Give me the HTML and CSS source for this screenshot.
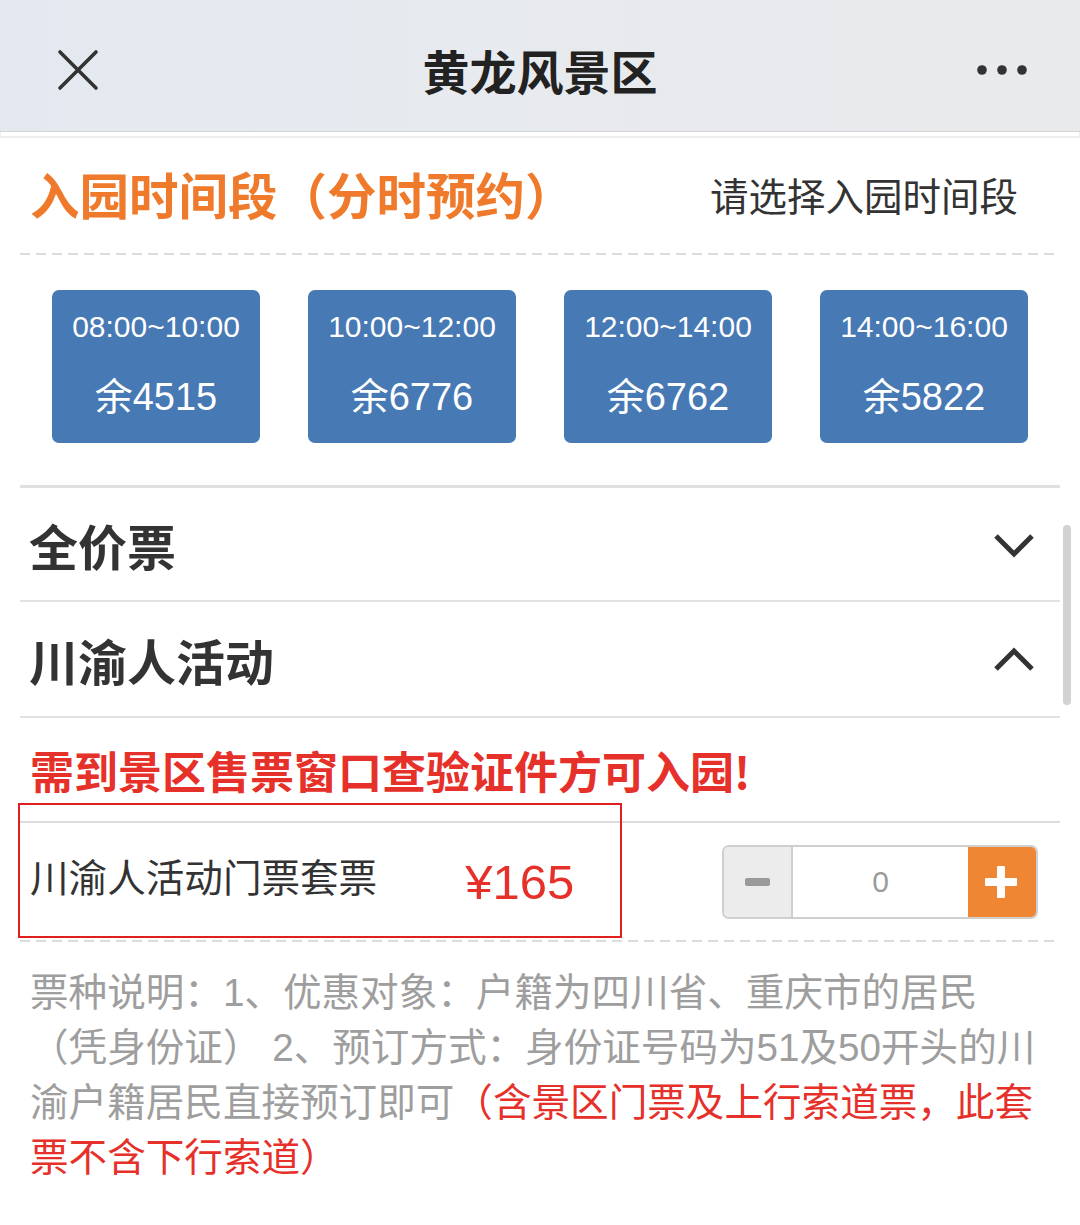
FILE: index.html
```html
<!DOCTYPE html>
<html lang="zh-CN">
<head>
<meta charset="utf-8">
<title>黄龙风景区</title>
<link rel="stylesheet" href="styles.css">
</head>
<body>
<header class="topbar">
  <svg class="close" width="42" height="42" viewBox="0 0 42 42"><path d="M3 3 L39 39 M39 3 L3 39" stroke="#333" stroke-width="3.6" stroke-linecap="round" fill="none"/></svg>
  <h1 class="title">黄龙风景区</h1>
  <svg class="more" width="52" height="12" viewBox="0 0 52 12"><circle cx="6" cy="6" r="4.8" fill="#333"/><circle cx="26" cy="6" r="4.8" fill="#333"/><circle cx="46" cy="6" r="4.8" fill="#333"/></svg>
</header>

<main class="page">
  <div class="scrollbar"></div>

  <section class="slot-head">
    <h2 class="slot-title">入园时间段（分时预约）</h2>
    <span class="slot-hint">请选择入园时间段</span>
  </section>
  <div class="dash"></div>

  <section class="slots">
    <div class="slot"><span class="slot-time">08:00~10:00</span><span class="slot-left">余4515</span></div>
    <div class="slot"><span class="slot-time">10:00~12:00</span><span class="slot-left">余6776</span></div>
    <div class="slot"><span class="slot-time">12:00~14:00</span><span class="slot-left">余6762</span></div>
    <div class="slot"><span class="slot-time">14:00~16:00</span><span class="slot-left">余5822</span></div>
  </section>

  <div class="acc acc-first">
    <span class="acc-name">全价票</span>
    <svg class="chev" width="44" height="30" viewBox="0 0 44 30"><polyline points="4,6 22,24 40,6" stroke="#333" stroke-width="5" fill="none" stroke-linejoin="miter"/></svg>
  </div>
  <div class="acc">
    <span class="acc-name">川渝人活动</span>
    <svg class="chev" width="44" height="30" viewBox="0 0 44 30"><polyline points="4,24 22,6 40,24" stroke="#333" stroke-width="5" fill="none" stroke-linejoin="miter"/></svg>
  </div>

  <p class="notice">需到景区售票窗口查验证件方可入园!</p>

  <div class="ticket">
    <div class="mark"></div>
    <span class="ticket-name">川渝人活动门票套票</span>
    <span class="ticket-price">¥165</span>
    <div class="stepper">
      <span class="step-minus"><i></i></span>
      <span class="step-val">0</span>
      <span class="step-plus"><i class="h"></i><i class="v"></i></span>
    </div>
  </div>
  <div class="dash"></div>

  <p class="desc">票种说明：1、优惠对象：户籍为四川省、重庆市的居民（凭身份证） 2、预订方式：身份证号码为51及50开头的川渝户籍居民直接预订即可<span class="red">（含景区门票及上行索道票，此套票不含下行索道）</span></p>
</main>
</body>
</html>
```

FILE: styles.css
```css
* { box-sizing: border-box; }
html, body { margin: 0; padding: 0; background: #fff; }
body {
  font-family: "Liberation Sans", "Noto Sans CJK SC", sans-serif;
  color: #333;
  width: 1080px;
  height: 1225px;
  overflow: hidden;
}

.topbar {
  height: 132px;
  display: flex;
  align-items: center;
  justify-content: space-between;
  padding: 8px 52px 0 57px;
  background: linear-gradient(90deg, #e4e9f1 0%, #e7eaee 45%, #e9eaec 100%);
  border-bottom: 1px solid #d3d3d3;
  box-shadow: 0 5px 0 -1px #fff, 0 6px 0 0 #eeeeee;
  position: relative;
  z-index: 2;
}
.close { display: block; }
.title {
  margin: 0;
  font-family: "Noto Sans CJK SC", sans-serif;
  font-size: 47px;
  font-weight: 700;
  color: #222;
  position: absolute;
  left: 0; right: 0;
  top: 40px;
  line-height: 60px;
  text-align: center;
  pointer-events: none;
}
.more { display: block; }

.page {
  margin: 0 20px;
  position: relative;
}
.scrollbar {
  position: absolute;
  left: 1043px;
  top: 393px;
  width: 8px;
  height: 180px;
  border-radius: 4px;
  background: #d2d2d2;
}

.slot-head {
  height: 121px;
  padding: 2px 42px 0 10px;
  display: flex;
  align-items: center;
  justify-content: space-between;
}
.slot-title {
  margin: 0;
  font-family: "Noto Sans CJK SC", sans-serif;
  font-size: 49.5px;
  font-weight: 700;
  color: #ef7a2c;
}
.slot-hint {
  font-family: "Noto Sans CJK SC", sans-serif;
  font-size: 38.5px;
  color: #333;
}

.dash {
  height: 2px;
  background: repeating-linear-gradient(90deg, #dcdcdc 0 10px, transparent 10px 16px);
}

.slots {
  display: grid;
  grid-template-columns: repeat(4, 208px);
  column-gap: 48px;
  padding: 35px 32px 42px;
  border-bottom: 3px solid #e0e0e0;
}
.slot {
  height: 153px;
  background: #4779b5;
  border-radius: 7px;
  color: #fff;
  display: flex;
  flex-direction: column;
  align-items: center;
}
.slot-time {
  font-size: 30px;
  line-height: 34px;
  margin-top: 20px;
}
.slot-left {
  font-size: 38px;
  line-height: 44px;
  margin-top: 31px;
}

.acc {
  height: 116px;
  display: flex;
  align-items: center;
  justify-content: space-between;
  padding: 0 24px 0 9px;
  border-bottom: 2px solid #e2e2e2;
}
.acc-first { height: 114px; }
.acc-name {
  font-family: "Noto Sans CJK SC", sans-serif;
  font-size: 49px;
  font-weight: 700;
  color: #333;
}
.chev { display: block; margin-top: 2px; }

.notice {
  margin: 0;
  height: 105px;
  padding-left: 10px;
  display: flex;
  align-items: center;
  font-family: "Noto Sans CJK SC", sans-serif;
  font-size: 44px;
  font-weight: 700;
  color: #e6302a;
  border-bottom: 2px solid #dcdcdc;
}

.ticket {
  position: relative;
  height: 117px;
  display: flex;
  align-items: center;
  padding: 0 22px 0 10px;
}
.mark {
  position: absolute;
  left: -2px;
  top: -20px;
  width: 604px;
  height: 135px;
  border: 2px solid #e0201e;
}
.ticket-name {
  font-family: "Noto Sans CJK SC", sans-serif;
  font-size: 38.6px;
  color: #333;
  margin-top: -14px;
}
.ticket-price {
  font-size: 49px;
  color: #e6302a;
  margin-left: 88px;
}
.stepper {
  margin-left: auto;
  width: 316px;
  height: 74px;
  display: flex;
  border: 2px solid #cfcfcf;
  border-radius: 7px;
  overflow: hidden;
}
.step-minus {
  width: 69px;
  background: #ececec;
  border-right: 2px solid #cfcfcf;
  display: flex;
  align-items: center;
  justify-content: center;
}
.step-minus i {
  width: 25px;
  height: 8px;
  border-radius: 2px;
  background: #9a9a9a;
}
.step-val {
  flex: 1;
  display: flex;
  align-items: center;
  justify-content: center;
  font-size: 30px;
  color: #9b9b9b;
}
.step-plus {
  width: 68px;
  background: #ef8633;
  position: relative;
}
.step-plus i {
  position: absolute;
  background: #fff;
  border-radius: 1px;
}
.step-plus .h { width: 32px; height: 8px; left: 17px; top: 31px; }
.step-plus .v { width: 8px; height: 32px; left: 29px; top: 19px; }

.desc {
  margin: 0;
  padding: 23px 0 0 10px;
  width: 1020px;
  font-family: "Liberation Sans", "Noto Sans CJK SC", sans-serif;
  font-size: 38.6px;
  line-height: 55px;
  color: #9e9e9e;
}
.desc .red { color: #e6302a; }
```
